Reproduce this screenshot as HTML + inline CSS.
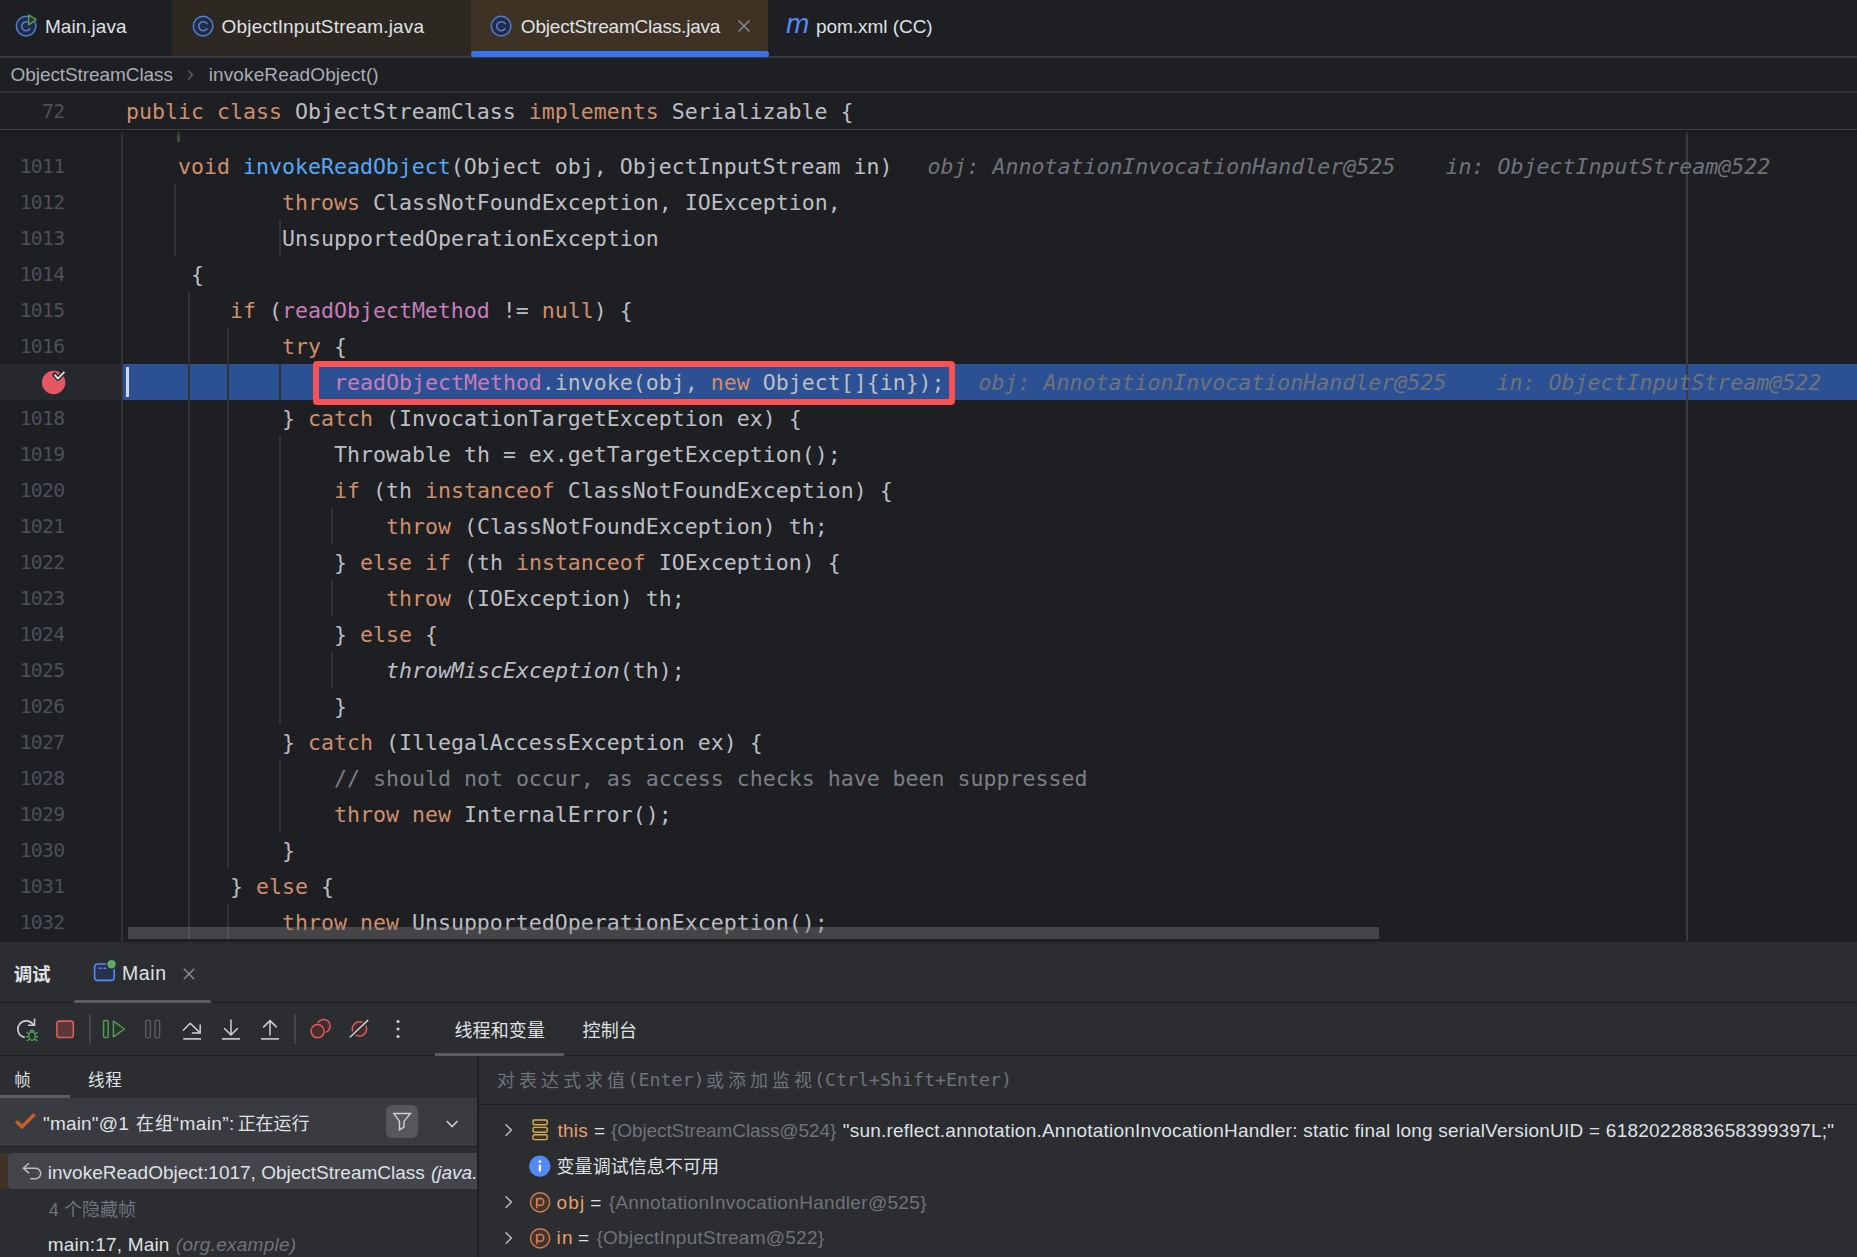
<!DOCTYPE html>
<html lang="zh"><head><meta charset="utf-8"><title>ObjectStreamClass.java</title>
<style>

*{box-sizing:border-box;margin:0;padding:0}
html,body{width:1857px;height:1257px;overflow:hidden;background:#1e1f22}
body{position:relative;font-family:"Liberation Sans","Noto Sans CJK SC",sans-serif;font-size:19px;color:#dfe1e5;-webkit-font-smoothing:antialiased}
.abs{position:absolute}
.mono{font-family:"DejaVu Sans Mono","Liberation Mono",monospace}
/* ---------- editor tabs ---------- */
#tabs{position:absolute;left:0;top:0;width:1857px;height:56px;background:#1e1f22}
.tab{position:absolute;top:0;height:56px}
.tab .lbl{position:absolute;top:0;line-height:52px;height:52px;white-space:nowrap;color:#dfe1e5;font-size:19px}
.hline{position:absolute;left:0;width:1857px;background:#393b40}
/* ---------- breadcrumbs ---------- */
#crumbs{position:absolute;left:0;top:58px;width:1857px;height:33px;background:#1e1f22;color:#a8adb6}
#crumbs span{position:absolute;top:0;line-height:32px;white-space:nowrap;font-size:19px}
/* ---------- code ---------- */
#editor{position:absolute;left:0;top:93px;width:1857px;height:849px;background:#1e1f22;overflow:hidden}
.ln{position:absolute;left:0;width:64.5px;text-align:right;font-family:"DejaVu Sans Mono","Liberation Mono",monospace;font-size:19.8px;line-height:36px;height:36px;color:#4b5059;letter-spacing:-0.7px;padding-top:1px}
.cl{position:absolute;height:36px;line-height:36px;padding-top:1px;white-space:pre;font-family:"DejaVu Sans Mono","Liberation Mono",monospace;font-size:21.59px;color:#bcbec4}
.k{color:#cf8e6d}.f{color:#c77dbb}.fd{color:#56a8f5}.c{color:#7a7e85}
.cl i{font-style:italic}
.hint{position:absolute;height:36px;line-height:36px;padding-top:1px;white-space:pre;font-family:"DejaVu Sans Mono","Liberation Mono",monospace;font-size:21.59px;font-style:italic;color:#6f737a}
.g{position:absolute;width:2px;background:#303236}
/* ---------- debug panel ---------- */
#dbg{position:absolute;left:0;top:942px;width:1857px;height:315px;background:#2b2d30;overflow:hidden}
.ui{position:absolute;white-space:nowrap;font-size:18px;line-height:24px;height:24px;color:#dfe1e5}
.la{font-size:19px}
.dim{color:#6f737a}
.dline{position:absolute;background:#1e1f22}
.vn{color:#e8a06e}

</style></head><body>
<div id="tabs">
<div class="tab" style="left:172px;width:299px;background:#2e2822"></div>
<div class="tab" style="left:471px;width:297px;background:#3e3224"></div>
<svg class="abs" style="left:13px;top:13px" width="26" height="26" viewBox="0 0 26 26"><circle cx="13.1" cy="13.1" r="9.8" fill="#252c42" stroke="#4d7ddb" stroke-width="1.5"/><path d="M16.9 10.6a4.5 4.5 0 1 0 0 5.2" fill="none" stroke="#4d7ddb" stroke-width="1.6" stroke-linecap="round"/><path d="M15.7 1.9l7.5 4.8-7.5 5.2z" fill="#25382f" stroke="#57965c" stroke-width="1.4" stroke-linejoin="round"/></svg>
<svg class="abs" style="left:190px;top:13px" width="26" height="26" viewBox="0 0 26 26"><circle cx="13.1" cy="13.1" r="9.8" fill="#252c42" stroke="#4d7ddb" stroke-width="1.5"/><path d="M16.9 10.6a4.5 4.5 0 1 0 0 5.2" fill="none" stroke="#4d7ddb" stroke-width="1.6" stroke-linecap="round"/></svg>
<svg class="abs" style="left:488px;top:13px" width="26" height="26" viewBox="0 0 26 26"><circle cx="13.1" cy="13.1" r="9.8" fill="#252c42" stroke="#4d7ddb" stroke-width="1.5"/><path d="M16.9 10.6a4.5 4.5 0 1 0 0 5.2" fill="none" stroke="#4d7ddb" stroke-width="1.6" stroke-linecap="round"/></svg>
<svg class="abs" style="left:736px;top:18px" width="16" height="16" viewBox="0 0 16 16"><path d="M2.5 2.5l11 11M13.5 2.5l-11 11" stroke="#868a91" stroke-width="1.5" fill="none"/></svg>
</div>
<div class="hline" style="top:56px;height:2px"></div>
<div class="abs" style="left:471px;top:51px;width:298px;height:6px;background:#3574f0;border-radius:3px"></div>
<div id="crumbs">
<svg class="abs" style="left:184px;top:9px" width="12" height="16" viewBox="0 0 12 16"><path d="M4.2 3.6l4.2 4.4-4.2 4.4" stroke="#5f6269" stroke-width="1.4" fill="none"/></svg>
</div>
<div class="hline" style="top:91px;height:2px;background:#323438"></div>
<div id="editor">
<div class="abs" style="left:0;top:271px;width:121px;height:36px;background:#26282e"></div>
<div class="abs" style="left:123px;top:271px;width:1734px;height:36px;background:#2b5093"></div>
<div class="abs" style="left:121px;top:37px;width:2px;height:812px;background:#323438"></div>
<div class="abs" style="left:1686px;top:37px;width:2px;height:811px;background:#393b40"></div>
<div class="abs" style="left:177px;top:37px;width:3px;height:12px;background:#394e41"></div>
<div class="g" style="left:174px;top:91px;height:72px"></div>
<div class="g" style="left:279px;top:127px;height:36px"></div>
<div class="g" style="left:188px;top:199px;height:648px"></div>
<div class="g" style="left:227px;top:235px;height:540px"></div>
<div class="g" style="left:227px;top:811px;height:36px"></div>
<div class="g" style="left:279px;top:271px;height:36px"></div>
<div class="g" style="left:279px;top:343px;height:288px"></div>
<div class="g" style="left:279px;top:667px;height:72px"></div>
<div class="g" style="left:331px;top:415px;height:36px"></div>
<div class="g" style="left:331px;top:487px;height:36px"></div>
<div class="g" style="left:331px;top:559px;height:36px"></div>
<div class="ln" style="top:55px">1011</div>
<div class="cl" style="left:178px;top:55px"><span class="k">void</span> <span class="fd">invokeReadObject</span>(Object obj, ObjectInputStream in)</div>
<div class="ln" style="top:91px">1012</div>
<div class="cl" style="left:282px;top:91px"><span class="k">throws</span> ClassNotFoundException, IOException,</div>
<div class="ln" style="top:127px">1013</div>
<div class="cl" style="left:282px;top:127px">UnsupportedOperationException</div>
<div class="ln" style="top:163px">1014</div>
<div class="cl" style="left:191px;top:163px">{</div>
<div class="ln" style="top:199px">1015</div>
<div class="cl" style="left:230px;top:199px"><span class="k">if</span> (<span class="f">readObjectMethod</span> != <span class="k">null</span>) {</div>
<div class="ln" style="top:235px">1016</div>
<div class="cl" style="left:282px;top:235px"><span class="k">try</span> {</div>
<div class="cl" style="left:334px;top:271px"><span class="f">readObjectMethod</span>.invoke(obj, <span class="k">new</span> Object[]{in});</div>
<div class="ln" style="top:307px">1018</div>
<div class="cl" style="left:282px;top:307px">} <span class="k">catch</span> (InvocationTargetException ex) {</div>
<div class="ln" style="top:343px">1019</div>
<div class="cl" style="left:334px;top:343px">Throwable th = ex.getTargetException();</div>
<div class="ln" style="top:379px">1020</div>
<div class="cl" style="left:334px;top:379px"><span class="k">if</span> (th <span class="k">instanceof</span> ClassNotFoundException) {</div>
<div class="ln" style="top:415px">1021</div>
<div class="cl" style="left:386px;top:415px"><span class="k">throw</span> (ClassNotFoundException) th;</div>
<div class="ln" style="top:451px">1022</div>
<div class="cl" style="left:334px;top:451px">} <span class="k">else if</span> (th <span class="k">instanceof</span> IOException) {</div>
<div class="ln" style="top:487px">1023</div>
<div class="cl" style="left:386px;top:487px"><span class="k">throw</span> (IOException) th;</div>
<div class="ln" style="top:523px">1024</div>
<div class="cl" style="left:334px;top:523px">} <span class="k">else</span> {</div>
<div class="ln" style="top:559px">1025</div>
<div class="cl" style="left:386px;top:559px"><i>throwMiscException</i>(th);</div>
<div class="ln" style="top:595px">1026</div>
<div class="cl" style="left:334px;top:595px">}</div>
<div class="ln" style="top:631px">1027</div>
<div class="cl" style="left:282px;top:631px">} <span class="k">catch</span> (IllegalAccessException ex) {</div>
<div class="ln" style="top:667px">1028</div>
<div class="cl" style="left:334px;top:667px"><span class="c">// should not occur, as access checks have been suppressed</span></div>
<div class="ln" style="top:703px">1029</div>
<div class="cl" style="left:334px;top:703px"><span class="k">throw new</span> InternalError();</div>
<div class="ln" style="top:739px">1030</div>
<div class="cl" style="left:282px;top:739px">}</div>
<div class="ln" style="top:775px">1031</div>
<div class="cl" style="left:230px;top:775px">} <span class="k">else</span> {</div>
<div class="ln" style="top:811px">1032</div>
<div class="cl" style="left:282px;top:811px"><span class="k">throw new</span> UnsupportedOperationException();</div>
<div class="hint" style="left:927.5px;top:55px">obj: AnnotationInvocationHandler@525</div>
<div class="hint" style="left:1445.5px;top:55px">in: ObjectInputStream@522</div>
<div class="hint" style="left:978.5px;top:271px">obj: AnnotationInvocationHandler@525</div>
<div class="hint" style="left:1496.5px;top:271px">in: ObjectInputStream@522</div>
<div class="abs" style="left:126px;top:274px;width:3px;height:30px;background:#d4d5db"></div>
<div class="abs" style="left:313px;top:268px;width:642px;height:44px;border:6px solid #fa5252;border-radius:4px"></div>
<svg class="abs" style="left:38px;top:272px" width="32" height="32" viewBox="0 0 32 32"><circle cx="15.6" cy="17.5" r="11.7" fill="#e55765"/><path d="M16.6 9.7l3.3 3.9 6.5-6.7" fill="none" stroke="#26282e" stroke-width="4.6" stroke-linecap="round" stroke-linejoin="round"/><path d="M16.6 9.7l3.3 3.9 6.5-6.7" fill="none" stroke="#dfe1e5" stroke-width="1.9" stroke-linejoin="round"/></svg>
<div class="abs" style="left:0;top:0;width:1857px;height:36px;background:#1e1f22"></div>
<div class="abs" style="left:0;top:36px;width:1857px;height:1px;background:#3b3d41"></div>
<div class="abs" style="left:0;top:37px;width:1857px;height:6px;background:linear-gradient(#191a1c,rgba(30,31,34,0))"></div>
<div class="ln" style="top:0">72</div>
<div class="cl" style="left:126px;top:0"><span class="k">public class</span> ObjectStreamClass <span class="k">implements</span> Serializable {</div>
<div class="abs" style="left:128px;top:834px;width:1251px;height:12px;background:rgba(128,128,130,.4)"></div>
</div>
<div id="dbg">
<svg class="abs" style="left:92px;top:17px" width="26" height="26" viewBox="0 0 26 26"><rect x="2.6" y="5" width="19.6" height="16.4" rx="3" fill="#25324d" stroke="#548af7" stroke-width="1.6"/><path d="M6.5 9.3h3M11.3 9.3h3" stroke="#548af7" stroke-width="1.5"/><circle cx="19.5" cy="5.3" r="5.6" fill="#2b2d30"/><circle cx="19.5" cy="5.3" r="4.2" fill="#5fad65"/></svg>
<svg class="abs" style="left:182px;top:25px" width="14" height="14" viewBox="0 0 14 14"><path d="M1.8 1.8l10.4 10.4M12.2 1.8L1.8 12.2" stroke="#868a91" stroke-width="1.5" fill="none"/></svg>
<div class="dline" style="left:0;top:60px;width:1857px;height:1px"></div>
<div class="abs" style="left:74px;top:57.5px;width:137px;height:3.5px;background:#5a5d63;border-radius:2px 2px 0 0"></div>
<svg class="abs" style="left:14px;top:73px" width="28" height="28" viewBox="0 0 28 28"><path d="M19.6 10.5A8.3 8.3 0 1 0 10.7 22.4" fill="none" stroke="#ced0d6" stroke-width="1.7"/><path d="M20.5 3.4V10.3H14" fill="none" stroke="#ced0d6" stroke-width="1.6"/><circle cx="18.1" cy="20.6" r="6.4" fill="#2b2d30"/><path d="M15.4 19.2l-2.9-1.9M20.8 19.2l2.9-1.9M14.9 21.7h-2.9M21.3 21.7h2.9M15.6 24l-2.8 2M20.6 24l2.8 2" fill="none" stroke="#57965c" stroke-width="1.4"/><path d="M16.1 17.9a2 2.6 0 0 1 4 0" fill="#253627" stroke="#57965c" stroke-width="1.4"/><ellipse cx="18.1" cy="21.2" rx="3.2" ry="4.1" fill="#253627" stroke="#57965c" stroke-width="1.4"/></svg>
<svg class="abs" style="left:54px;top:76px" width="22" height="22" viewBox="0 0 22 22"><rect x="2.9" y="3.1" width="16.4" height="16.4" rx="2.6" fill="#5e3838" stroke="#db5c5c" stroke-width="1.6"/></svg>
<div class="abs" style="left:89px;top:72px;width:2px;height:30px;background:#43454a"></div>
<svg class="abs" style="left:101px;top:76px" width="26" height="22" viewBox="0 0 26 22"><rect x="2.6" y="2.4" width="4.6" height="17.2" rx="1" fill="#253627" stroke="#57965c" stroke-width="1.5"/><path d="M12.4 3.2v15.6l11-7.8z" fill="#253627" stroke="#57965c" stroke-width="1.5" stroke-linejoin="round"/></svg>
<svg class="abs" style="left:144px;top:76px" width="18" height="22" viewBox="0 0 18 22"><rect x="1.8" y="2.4" width="4.6" height="17.2" rx="1" fill="none" stroke="#5a5d63" stroke-width="1.4"/><rect x="11" y="2.4" width="4.6" height="17.2" rx="1" fill="none" stroke="#5a5d63" stroke-width="1.4"/></svg>
<svg class="abs" style="left:181px;top:76px" width="22" height="24" viewBox="0 0 22 24"><path d="M2.2 20.9h17.8" stroke="#ced0d6" stroke-width="1.6"/><path d="M2 12.6L9.2 5.2 18.6 14.4" fill="none" stroke="#ced0d6" stroke-width="1.5"/><path d="M19.2 6.6v8.4h-8.4" fill="none" stroke="#ced0d6" stroke-width="1.5"/></svg>
<svg class="abs" style="left:220px;top:76px" width="22" height="24" viewBox="0 0 22 24"><path d="M2 20.9h18" stroke="#ced0d6" stroke-width="1.6"/><path d="M11 1.6v15M4.2 10.2l6.8 6.8 6.8-6.8" fill="none" stroke="#ced0d6" stroke-width="1.5"/></svg>
<svg class="abs" style="left:259px;top:76px" width="22" height="24" viewBox="0 0 22 24"><path d="M2 20.9h18" stroke="#ced0d6" stroke-width="1.6"/><path d="M11 17.6v-15M4.2 9.4L11 2.6l6.8 6.8" fill="none" stroke="#ced0d6" stroke-width="1.5"/></svg>
<div class="abs" style="left:293.5px;top:72px;width:2px;height:30px;background:#43454a"></div>
<svg class="abs" style="left:308px;top:74px" width="26" height="26" viewBox="0 0 26 26"><circle cx="15.6" cy="10" r="6.6" fill="#4b2b2b" stroke="#db5c5c" stroke-width="1.5"/><circle cx="9.6" cy="15.2" r="8.3" fill="#2b2d30"/><circle cx="9.6" cy="15.2" r="6.6" fill="#4b2b2b" stroke="#db5c5c" stroke-width="1.5"/></svg>
<svg class="abs" style="left:347px;top:74px" width="26" height="26" viewBox="0 0 26 26"><circle cx="12.4" cy="13" r="7.2" fill="#4b2b2b" stroke="#db5c5c" stroke-width="1.5"/><path d="M2.6 21.6L21.4 3.8" stroke="#2b2d30" stroke-width="4.5"/><path d="M3.2 21L20.8 4.4" stroke="#ced0d6" stroke-width="1.5" stroke-linecap="round"/></svg>
<svg class="abs" style="left:394px;top:75px" width="8" height="24" viewBox="0 0 8 24"><circle cx="4" cy="4.5" r="1.6" fill="#ced0d6"/><circle cx="4" cy="12" r="1.6" fill="#ced0d6"/><circle cx="4" cy="19.5" r="1.6" fill="#ced0d6"/></svg>
<div class="dline" style="left:0;top:113px;width:1857px;height:1px"></div>
<div class="abs" style="left:435px;top:111px;width:129px;height:3px;background:#5a5d63"></div>
<div class="abs" style="left:0;top:153px;width:70px;height:3px;background:#5a5d63"></div>
<div class="abs" style="left:0;top:156px;width:477px;height:48px;background:#393b40"></div>
<div class="dline" style="left:0;top:204px;width:477px;height:1px"></div>
<svg class="abs" style="left:13px;top:169px" width="26" height="22" viewBox="0 0 26 22"><path d="M3.2 10.25L9.1 15.7 21.6 3.25" fill="none" stroke="#c45e2a" stroke-width="3.7" stroke-linejoin="miter"/></svg>
<div class="abs" style="left:386px;top:163px;width:32.4px;height:33px;background:#55575c;border-radius:6px"></div>
<svg class="abs" style="left:391px;top:168.4px" width="23" height="23" viewBox="0 0 23 23"><path d="M2.9 3.6H19.3L13 11.4V17.2L8.5 19.9V11.4Z" fill="none" stroke="#ced0d6" stroke-width="1.5" stroke-linejoin="miter"/></svg>
<svg class="abs" style="left:444px;top:175px" width="16" height="12" viewBox="0 0 16 12"><path d="M2.7 4l5.4 5.6 5.4-5.6" fill="none" stroke="#ced0d6" stroke-width="1.5"/></svg>
<div class="abs" style="left:0;top:211px;width:12px;height:36px;background:#3e3225"></div>
<div class="abs" style="left:7.5px;top:211px;width:470px;height:36px;background:#43454a;border-radius:4px 0 0 4px"></div>
<svg class="abs" style="left:22px;top:219px" width="22" height="22" viewBox="0 0 22 22"><path d="M6.9 2.3L1.4 7.2l5.5 4.9" fill="none" stroke="#bec0c5" stroke-width="1.5"/><path d="M1.8 7.2H13.4a5.3 5.3 0 0 1 0 10.6H8.4" fill="none" stroke="#bec0c5" stroke-width="1.5"/></svg>
<div class="dline" style="left:477px;top:114px;width:2px;height:201px"></div>
<span style="position:absolute;top:125px;height:24px;line-height:24px;white-space:pre;color:#6f737a;left:497px;font-size:18px;letter-spacing:4px;font-family:'Noto Sans CJK SC',sans-serif">对表达式求值</span>
<span class="mono" style="position:absolute;top:125px;height:24px;line-height:24px;white-space:pre;color:#6f737a;left:627.5px;font-size:18.27px;padding-top:1px">(Enter)</span>
<span style="position:absolute;top:125px;height:24px;line-height:24px;white-space:pre;color:#6f737a;left:706px;font-size:18px;letter-spacing:4px;font-family:'Noto Sans CJK SC',sans-serif">或添加监视</span>
<span class="mono" style="position:absolute;top:125px;height:24px;line-height:24px;white-space:pre;color:#6f737a;left:814px;font-size:18.27px;padding-top:1px">(Ctrl+Shift+Enter)</span>
<div class="dline" style="left:479px;top:162px;width:1378px;height:1px"></div>
<svg class="abs" style="left:502px;top:180px" width="14" height="16" viewBox="0 0 14 16"><path d="M3.6 2.4l5.8 5.7-5.8 5.7" fill="none" stroke="#b4b8bf" stroke-width="1.5"/></svg>
<svg class="abs" style="left:529px;top:176px" width="22" height="24" viewBox="0 0 22 24"><rect x="4" y="2" width="14.2" height="4.8" rx="1.4" fill="#3d3223" stroke="#d6ae58" stroke-width="1.4"/><rect x="4" y="9.4" width="14.2" height="4.8" rx="1.4" fill="#3d3223" stroke="#d6ae58" stroke-width="1.4"/><rect x="4" y="16.8" width="14.2" height="4.8" rx="1.4" fill="#3d3223" stroke="#d6ae58" stroke-width="1.4"/></svg>
<svg class="abs" style="left:527px;top:211px" width="26" height="26" viewBox="0 0 26 26"><circle cx="12.8" cy="13.2" r="10.6" fill="#548af7"/><circle cx="12.9" cy="8.6" r="1.4" fill="#fff"/><path d="M12.9 12.6v4.9" stroke="#fff" stroke-width="2.3" stroke-linecap="round"/></svg>
<svg class="abs" style="left:502px;top:252px" width="14" height="16" viewBox="0 0 14 16"><path d="M3.6 2.4l5.8 5.7-5.8 5.7" fill="none" stroke="#b4b8bf" stroke-width="1.5"/></svg>
<svg class="abs" style="left:527px;top:247px" width="26" height="26" viewBox="0 0 26 26"><circle cx="13.1" cy="13.3" r="9.6" fill="#45322b" stroke="#c77d55" stroke-width="1.5"/><path d="M9.7 19.3V9" fill="none" stroke="#c77d55" stroke-width="1.6"/><circle cx="13.2" cy="12.9" r="3.5" fill="none" stroke="#c77d55" stroke-width="1.6"/></svg>
<svg class="abs" style="left:502px;top:288px" width="14" height="16" viewBox="0 0 14 16"><path d="M3.6 2.4l5.8 5.7-5.8 5.7" fill="none" stroke="#b4b8bf" stroke-width="1.5"/></svg>
<svg class="abs" style="left:527px;top:283px" width="26" height="26" viewBox="0 0 26 26"><circle cx="13.1" cy="13.3" r="9.6" fill="#45322b" stroke="#c77d55" stroke-width="1.5"/><path d="M9.7 19.3V9" fill="none" stroke="#c77d55" stroke-width="1.6"/><circle cx="13.2" cy="12.9" r="3.5" fill="none" stroke="#c77d55" stroke-width="1.6"/></svg>
</div>
<div id="txt">
<span class="ui" style="left:44.9px;top:15px;font-size:19px;color:#dfe1e5;letter-spacing:0.05px;">Main.java</span>
<span class="ui" style="left:221.6px;top:15px;font-size:19px;color:#dfe1e5;letter-spacing:0.19px;">ObjectInputStream.java</span>
<span class="ui" style="left:520.8px;top:15px;font-size:19px;color:#dfe1e5;letter-spacing:-0.2px;">ObjectStreamClass.java</span>
<span class="ui" style="left:816px;top:15px;font-size:19px;color:#dfe1e5;letter-spacing:-0.045px;">pom.xml (CC)</span>
<span class="ui" style="left:785.9px;top:12px;font-size:28px;color:#548af7;font-style:italic;">m</span>
<span class="ui" style="left:10.6px;top:63px;font-size:19px;color:#a8adb6;letter-spacing:-0.081px;">ObjectStreamClass</span>
<span class="ui" style="left:208.7px;top:63px;font-size:19px;color:#a8adb6;letter-spacing:0.123px;">invokeReadObject()</span>
<span class="ui" style="left:13.7px;top:963px;font-size:18.5px;color:#dfe1e5;letter-spacing:-0.1px;font-weight:bold;">调试</span>
<span class="ui" style="left:122px;top:961px;font-size:19.5px;color:#dfe1e5;letter-spacing:0.6px;">Main</span>
<span class="ui" style="left:454.5px;top:1019px;font-size:18px;color:#dfe1e5;letter-spacing:0.125px;">线程和变量</span>
<span class="ui" style="left:582.6px;top:1019px;font-size:18px;color:#dfe1e5;letter-spacing:0.2px;">控制台</span>
<span class="ui" style="left:14.3px;top:1068px;font-size:16.5px;color:#dfe1e5;">帧</span>
<span class="ui" style="left:87.9px;top:1068px;font-size:16.5px;color:#dfe1e5;letter-spacing:0.9px;">线程</span>
<span class="ui" style="left:43px;top:1112px;font-size:19px;color:#dfe1e5;letter-spacing:0.171px;">"main"@1</span>
<span class="ui" style="left:136px;top:1112px;font-size:18px;color:#dfe1e5;letter-spacing:0.9px;">在组</span>
<span class="ui" style="left:172.8px;top:1112px;font-size:19px;color:#dfe1e5;letter-spacing:0.4px;">“main”:</span>
<span class="ui" style="left:237.7px;top:1112px;font-size:18px;color:#dfe1e5;letter-spacing:-0.066px;">正在运行</span>
<span class="ui" style="left:47.8px;top:1161px;font-size:19px;color:#dfe1e5;">invokeReadObject:1017, ObjectStreamClass</span>
<div class="abs" style="left:425px;top:1150px;width:51.5px;height:40px;overflow:hidden"><span class="ui" style="left:6px;top:11px;font-size:19px;color:#dfe1e5;font-style:italic;">(java.io)</span></div>
<span class="ui" style="left:48.8px;top:1198px;font-size:18px;color:#6f737a;letter-spacing:0.06px;">4 个隐藏帧</span>
<span class="ui" style="left:47.8px;top:1233px;font-size:19px;color:#dfe1e5;letter-spacing:0.191px;">main:17, Main</span>
<span class="ui" style="left:175.8px;top:1233px;font-size:19px;color:#6f737a;letter-spacing:0.258px;font-style:italic;">(org.example)</span>
<span class="ui" style="left:557.5px;top:1119px;font-size:19px;color:#e8a06e;letter-spacing:0.2px;">this</span>
<span class="ui" style="left:594px;top:1119px;font-size:19px;color:#dfe1e5;">=</span>
<span class="ui" style="left:611px;top:1119px;font-size:19px;color:#6f737a;letter-spacing:-0.091px;">{ObjectStreamClass@524}</span>
<span class="ui" style="left:842.7px;top:1119px;font-size:19px;color:#dfe1e5;letter-spacing:0.231px;">"sun.reflect.annotation.AnnotationInvocationHandler: static final long serialVersionUID = 6182022883658399397L;"</span>
<span class="ui" style="left:556.5px;top:1155px;font-size:18px;color:#dfe1e5;letter-spacing:0.075px;">变量调试信息不可用</span>
<span class="ui" style="left:556.5px;top:1191px;font-size:19px;color:#e8a06e;letter-spacing:1.2px;">obj</span>
<span class="ui" style="left:590.2px;top:1191px;font-size:19px;color:#dfe1e5;">=</span>
<span class="ui" style="left:608.7px;top:1191px;font-size:19px;color:#6f737a;letter-spacing:0.316px;">{AnnotationInvocationHandler@525}</span>
<span class="ui" style="left:556.5px;top:1226px;font-size:19px;color:#e8a06e;letter-spacing:1.2px;">in</span>
<span class="ui" style="left:578px;top:1226px;font-size:19px;color:#dfe1e5;">=</span>
<span class="ui" style="left:596.5px;top:1226px;font-size:19px;color:#6f737a;letter-spacing:0.25px;">{ObjectInputStream@522}</span>
</div>
</body></html>
